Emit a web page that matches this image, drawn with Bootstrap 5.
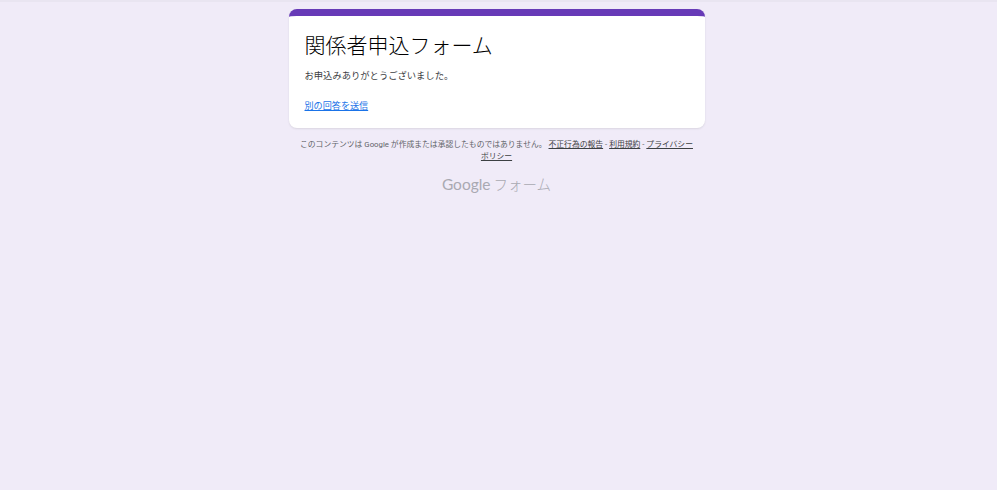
<!DOCTYPE html>
<html lang="ja">
<head>
<meta charset="utf-8">
<title>関係者申込フォーム</title>
<link rel="stylesheet" href="https://cdn.jsdelivr.net/npm/bootstrap@5.3.0/dist/css/bootstrap.min.css">
<style>
html,body{height:100%;}
body{background:#f0ebf8;font-family:Roboto,"Noto Sans CJK JP",sans-serif;color:#202124;overflow:hidden;}
.topline{height:2px;background:#e9e5f1;}
.page-col{padding-right:4px;}
.form-wrap{width:416px;}
.form-card{border:0;border-top:7px solid #673ab7;border-radius:8px;margin-top:7px;height:119px;padding:0 16px;box-shadow:0 1px 2px rgba(60,64,67,.12);overflow:hidden;}
.form-title{font-size:21px;line-height:30px;font-weight:300;margin:15px 0 0;color:#000;}
.form-msg{font-size:9.3px;line-height:14px;font-weight:400;margin:8px 0 0;color:#3c4043;}
.again-link{display:inline-block;font-size:9.1px;line-height:14px;margin-top:16px;color:#1a73e8;font-weight:400;text-decoration:underline;}
.legal{font-size:7.8px;line-height:12px;color:#5f6368;text-align:center;margin-top:11px;font-weight:400;white-space:nowrap;}
.legal a{color:#3c4043;}
.brand{margin-top:11px;text-align:center;color:#a9a9b2;line-height:20px;font-size:14.5px;font-weight:300;display:flex;justify-content:center;align-items:baseline;gap:3px;}
.brand-g{font-family:Lato,Roboto,sans-serif;font-weight:400;font-size:15.5px;}
</style>
</head>
<body>
<div class="topline"></div>
<div class="d-flex justify-content-center page-col">
<main class="form-wrap">
<div class="card form-card">
<h1 class="form-title">関係者申込フォーム</h1>
<p class="form-msg">お申込みありがとうございました。</p>
<div><a class="again-link" href="#">別の回答を送信</a></div>
</div>
<div class="legal">このコンテンツは Google が作成または承認したものではありません。 <a href="#">不正行為の報告</a> - <a href="#">利用規約</a> - <a href="#">プライバシー<br>ポリシー</a></div>
<div class="brand"><span class="brand-g">Google</span><span>フォーム</span></div>
</main>
</div>
<script src="https://cdn.jsdelivr.net/npm/bootstrap@5.3.0/dist/js/bootstrap.bundle.min.js"></script>
</body>
</html>
